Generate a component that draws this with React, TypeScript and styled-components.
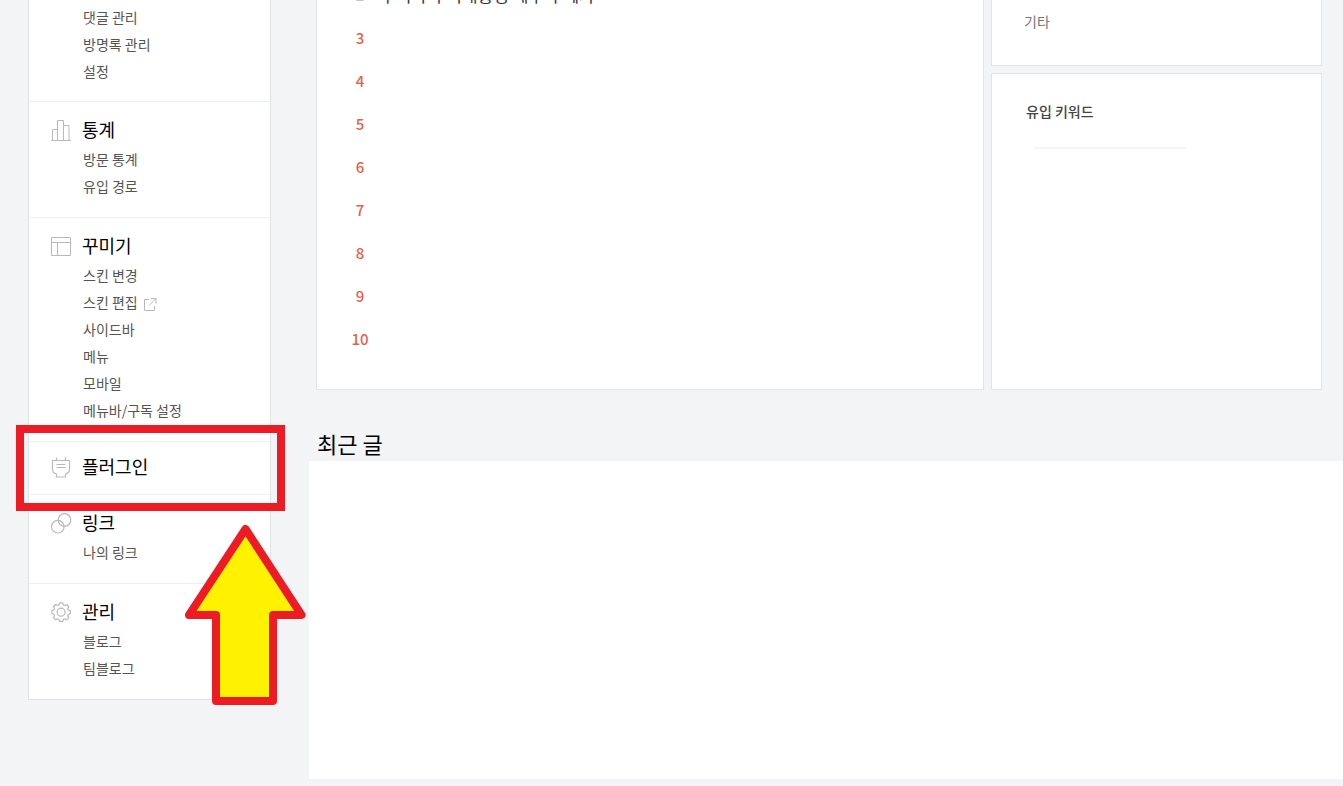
import React from "react";
import styled, { createGlobalStyle, css } from "styled-components";

const GlobalStyle = createGlobalStyle`
  *, *::before, *::after { box-sizing: border-box; }
  body {
    margin: 0;
    background: #f3f4f6;
    color: #000;
    font-family: "Noto Sans CJK KR", "Noto Sans", sans-serif;
  }
  ul, ol { margin: 0; padding: 0; list-style: none; }
  h2, h3 { margin: 0; font-weight: 400; }
  a { color: inherit; text-decoration: none; }
`;

const Page = styled.div`
  display: flex;
  align-items: flex-start;
  gap: 38px;
  min-height: 100vh;
  padding-left: 28px;
  overflow: hidden;
`;

const Sidebar = styled.nav`
  position: relative;
  flex: 0 0 243px;
  background: #fff;
  border: 1px solid #dfe3e8;
  border-top: 0;
`;

const Section = styled.section<{ $compact?: boolean; $first?: boolean }>`
  position: relative;
  padding: ${(p) => (p.$compact ? "11px 0 14px" : "14px 0 17px")};
  border-top: 1px solid #edf0f3;
  ${(p) =>
    p.$first &&
    css`
      padding: 4px 0 16px;
      border-top: 0;
    `}
`;

const SectionTitle = styled.h2`
  display: flex;
  align-items: center;
  gap: 10px;
  padding-left: 21px;
  font-size: 18px;
  line-height: 27px;
`;

const IconSvg = styled.svg`
  flex: none;
  width: 22px;
  height: 22px;
  fill: none;
  stroke: #b9b9b9;
`;

const SubList = styled.ul`
  padding-left: 54px;
  ${SectionTitle} + & {
    padding-top: 3px;
  }
`;

const SubItem = styled.li`
  color: #555;
  font-size: 14px;
  line-height: 27px;
  a {
    display: inline-flex;
    align-items: center;
    gap: 5px;
  }
`;

const ExternalIcon = styled.svg`
  width: 14px;
  height: 14px;
  margin-top: 2px;
  fill: none;
  stroke: #b9b9b9;
`;

const Highlight = styled.div`
  position: absolute;
  inset: -17px -15px -17px -13px;
  z-index: 1;
  border: 8px solid #ed1c24;
  pointer-events: none;
`;

const Arrow = styled.svg`
  position: absolute;
  right: -36px;
  bottom: -6px;
  z-index: 2;
  width: 122px;
  height: 182px;
  fill: #fff200;
  stroke: #ed1c24;
  stroke-width: 8;
  stroke-linejoin: round;
`;

const Main = styled.main`
  flex: 1;
  min-width: 0;
`;

const Dashboard = styled.div`
  display: grid;
  grid-template-columns: minmax(0, 1fr) 331px;
  gap: 7px;
  padding: 0 21px 0 7px;
`;

const Card = styled.section<{ $open?: boolean }>`
  background: #fff;
  border: 1px solid #e1e4e9;
  ${(p) => p.$open && "border-top: 0;"}
  overflow: hidden;
`;

const SideCards = styled.div`
  display: grid;
  grid-template-rows: auto 1fr;
  gap: 7px;
`;

const RankList = styled.ol`
  margin-top: -27px;
  padding: 0 33px 29px;
`;

const RankItem = styled.li`
  display: flex;
  align-items: center;
  gap: 10px;
  height: 43px;
  color: #333;
  font-size: 17px;
`;

const Rank = styled.span<{ $muted?: boolean }>`
  width: 20px;
  color: ${(p) => (p.$muted ? "#c4c4c4" : "#e35f4e")};
  font-size: 15px;
  font-weight: 500;
  text-align: center;
`;

const Referrer = styled.p`
  margin: 0;
  padding: 7px 32px 30px;
  color: #777;
  font-size: 14px;
  line-height: 28px;
`;

const CardTitle = styled.h3`
  padding: 23px 34px 0;
  color: #444;
  font-size: 14px;
  font-weight: 500;
  line-height: 28px;
`;

const KeywordRule = styled.hr`
  width: 151px;
  height: 2px;
  margin: 22px 0 0 43px;
  border: 0;
  background: #f5f5f5;
`;

const RecentTitle = styled.h2`
  padding: 37px 8px 1px;
  font-size: 22px;
  line-height: 33px;
`;

const RecentPanel = styled.div`
  height: 318px;
  background: #fff;
`;

const icons = {
  chart: (
    <path d="M1 21.5h20M2.500 21V10.500h5M7.500 21V1.500h6V21M13.500 6.500h5.500V21" />
  ),
  layout: <path d="M1.500 2.500h19v18h-19zM1.500 7.500h19M7.500 7.500v13" />,
  plug: (
    <path
      strokeWidth="1.2"
      d="M6.500 1.500v3M15.500 1.500v3M2.500 4.500h17v9c0 3-2 4-4 4.500v3h-9v-3c-2-.5-4-1.500-4-4.500zM6.500 8.500h9M6.500 11.500h9"
    />
  ),
  link: (
    <g strokeWidth="1.2">
      <circle cx="7.800" cy="14.700" r="6.300" />
      <circle cx="14.500" cy="8" r="6.300" />
    </g>
  ),
  gear: (
    <g strokeWidth="1.300" transform="translate(1 .5) scale(.92)">
      <path
        strokeLinejoin="round"
        d="M9.300 1.500h3.400l.7 2.300 1.400.6 2.100-1.100 2.400 2.400-1.100 2.100.6 1.400 2.200.7v3.400l-2.200.7-.6 1.400 1.100 2.100-2.400 2.400-2.100-1.100-1.400.6-.7 2.300H9.300l-.7-2.300-1.400-.6-2.100 1.100-2.400-2.400 1.100-2.100-.6-1.400-2.200-.7V9.900l2.200-.7.6-1.400-1.100-2.100 2.400-2.400 2.100 1.100 1.400-.6z"
      />
      <circle cx="11" cy="11.600" r="4.300" />
    </g>
  ),
};

interface Menu {
  title?: string;
  icon?: keyof typeof icons;
  items: string[];
  highlighted?: boolean;
}

const menus: Menu[] = [
  { items: ["댓글 관리", "방명록 관리", "설정"] },
  { title: "통계", icon: "chart", items: ["방문 통계", "유입 경로"] },
  {
    title: "꾸미기",
    icon: "layout",
    items: ["스킨 변경", "스킨 편집", "사이드바", "메뉴", "모바일", "메뉴바/구독 설정"],
  },
  { title: "플러그인", icon: "plug", items: [], highlighted: true },
  { title: "링크", icon: "link", items: ["나의 링크"] },
  { title: "관리", icon: "gear", items: ["블로그", "팀블로그"] },
];

const posts = [
  { rank: 2, title: "우리나라 역대통령 예우 수혜자" },
  ...[3, 4, 5, 6, 7, 8, 9, 10].map((rank) => ({ rank, title: "" })),
];

export default function App() {
  return (
    <>
      <GlobalStyle />
      <Page>
        <Sidebar>
          {menus.map((menu, index) => (
            <Section key={index} $first={index === 0} $compact={menu.highlighted}>
              {menu.title && menu.icon && (
                <SectionTitle>
                  <IconSvg viewBox="0 0 22 22" aria-hidden="true">
                    {icons[menu.icon]}
                  </IconSvg>
                  <a href="#">{menu.title}</a>
                </SectionTitle>
              )}
              {menu.items.length > 0 && (
                <SubList>
                  {menu.items.map((item) => (
                    <SubItem key={item}>
                      <a href="#">
                        {item}
                        {item === "스킨 편집" && (
                          <ExternalIcon viewBox="0 0 14 14" aria-hidden="true">
                            <path d="M6 2.500H1.500v11h10V9M8 1.500h5v5M13 1.500 6 8.500" />
                          </ExternalIcon>
                        )}
                      </a>
                    </SubItem>
                  ))}
                </SubList>
              )}
              {menu.highlighted && <Highlight />}
            </Section>
          ))}
          <Arrow viewBox="0 0 122 182" aria-hidden="true">
            <path d="M61.500 6 117.500 92H89v86H32V92H5z" />
          </Arrow>
        </Sidebar>
        <Main>
          <Dashboard>
            <Card $open>
              <RankList>
                {posts.map((post) => (
                  <RankItem key={post.rank}>
                    <Rank $muted={post.rank === 2}>{post.rank}</Rank>
                    {post.title && <a href="#">{post.title}</a>}
                  </RankItem>
                ))}
              </RankList>
            </Card>
            <SideCards>
              <Card $open>
                <Referrer>기타</Referrer>
              </Card>
              <Card>
                <CardTitle>유입 키워드</CardTitle>
                <KeywordRule />
              </Card>
            </SideCards>
          </Dashboard>
          <RecentTitle>최근 글</RecentTitle>
          <RecentPanel />
        </Main>
      </Page>
    </>
  );
}
